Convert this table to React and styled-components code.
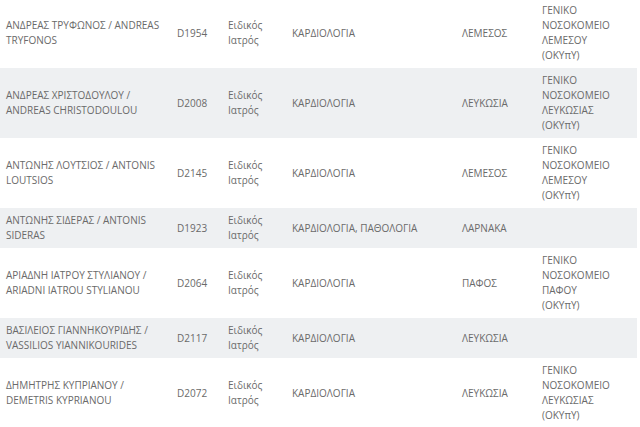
import styled, { createGlobalStyle } from 'styled-components';

const GlobalStyle = createGlobalStyle`
  html, body {
    margin: 0;
    padding: 0;
    background: #ffffff;
  }
  body {
    font-family: 'Open Sans', 'Noto Sans', sans-serif;
  }
`;

const Page = styled.div`
  width: 640px;
  height: 427px;
  overflow: hidden;
`;

const Table = styled.table`
  width: 637px;
  margin-top: -2px;
  border-collapse: collapse;
  table-layout: fixed;
  font-size: 10px;
  line-height: 15px;
  color: #6a6a6a;
`;

const Col = styled.col`
  width: ${({ $w }) => $w}px;
`;

const Row = styled.tr`
  background: ${({ $striped }) => ($striped ? '#eef0f2' : '#ffffff')};
`;

const Cell = styled.td`
  padding: 5px 6px;
  vertical-align: middle;
  text-align: left;
`;

const HospitalCell = styled(Cell)`
  padding-right: 24px;
`;

const columns = [171, 51, 64, 170, 80, 101];

const doctors = [
  {
    name: 'ΑΝΔΡΕΑΣ ΤΡΥΦΩΝΟΣ / ANDREAS TRYFONOS',
    code: 'D1954',
    specialty: 'ΚΑΡΔΙΟΛΟΓΙΑ',
    city: 'ΛΕΜΕΣΟΣ',
    hospital: 'ΓΕΝΙΚΟ ΝΟΣΟΚΟΜΕΙΟ ΛΕΜΕΣΟΥ (ΟΚΥπΥ)',
  },
  {
    name: 'ΑΝΔΡΕΑΣ ΧΡΙΣΤΟΔΟΥΛΟΥ / ANDREAS CHRISTODOULOU',
    code: 'D2008',
    specialty: 'ΚΑΡΔΙΟΛΟΓΙΑ',
    city: 'ΛΕΥΚΩΣΙΑ',
    hospital: 'ΓΕΝΙΚΟ ΝΟΣΟΚΟΜΕΙΟ ΛΕΥΚΩΣΙΑΣ (ΟΚΥπΥ)',
  },
  {
    name: 'ΑΝΤΩΝΗΣ ΛΟΥΤΣΙΟΣ / ANTONIS LOUTSIOS',
    code: 'D2145',
    specialty: 'ΚΑΡΔΙΟΛΟΓΙΑ',
    city: 'ΛΕΜΕΣΟΣ',
    hospital: 'ΓΕΝΙΚΟ ΝΟΣΟΚΟΜΕΙΟ ΛΕΜΕΣΟΥ (ΟΚΥπΥ)',
  },
  {
    name: 'ΑΝΤΩΝΗΣ ΣΙΔΕΡΑΣ / ANTONIS SIDERAS',
    code: 'D1923',
    specialty: 'ΚΑΡΔΙΟΛΟΓΙΑ, ΠΑΘΟΛΟΓΙΑ',
    city: 'ΛΑΡΝΑΚΑ',
    hospital: '',
  },
  {
    name: 'ΑΡΙΑΔΝΗ ΙΑΤΡΟΥ ΣΤΥΛΙΑΝΟΥ / ARIADNI IATROU STYLIANOU',
    code: 'D2064',
    specialty: 'ΚΑΡΔΙΟΛΟΓΙΑ',
    city: 'ΠΑΦΟΣ',
    hospital: 'ΓΕΝΙΚΟ ΝΟΣΟΚΟΜΕΙΟ ΠΑΦΟΥ (ΟΚΥπΥ)',
  },
  {
    name: 'ΒΑΣΙΛΕΙΟΣ ΓΙΑΝΝΗΚΟΥΡΙΔΗΣ / VASSILIOS YIANNIKOURIDES',
    code: 'D2117',
    specialty: 'ΚΑΡΔΙΟΛΟΓΙΑ',
    city: 'ΛΕΥΚΩΣΙΑ',
    hospital: '',
  },
  {
    name: 'ΔΗΜΗΤΡΗΣ ΚΥΠΡΙΑΝΟΥ / DEMETRIS KYPRIANOU',
    code: 'D2072',
    specialty: 'ΚΑΡΔΙΟΛΟΓΙΑ',
    city: 'ΛΕΥΚΩΣΙΑ',
    hospital: 'ΓΕΝΙΚΟ ΝΟΣΟΚΟΜΕΙΟ ΛΕΥΚΩΣΙΑΣ (ΟΚΥπΥ)',
  },
];

export default function App() {
  return (
    <Page>
      <GlobalStyle />
      <Table>
        <colgroup>
          {columns.map((w, i) => (
            <Col key={i} $w={w} />
          ))}
        </colgroup>
        <tbody>
          {doctors.map((d, i) => (
            <Row key={d.code} $striped={i % 2 === 1}>
              <Cell>{d.name}</Cell>
              <Cell>{d.code}</Cell>
              <Cell>Ειδικός Ιατρός</Cell>
              <Cell>{d.specialty}</Cell>
              <Cell>{d.city}</Cell>
              <HospitalCell>{d.hospital}</HospitalCell>
            </Row>
          ))}
        </tbody>
      </Table>
    </Page>
  );
}
